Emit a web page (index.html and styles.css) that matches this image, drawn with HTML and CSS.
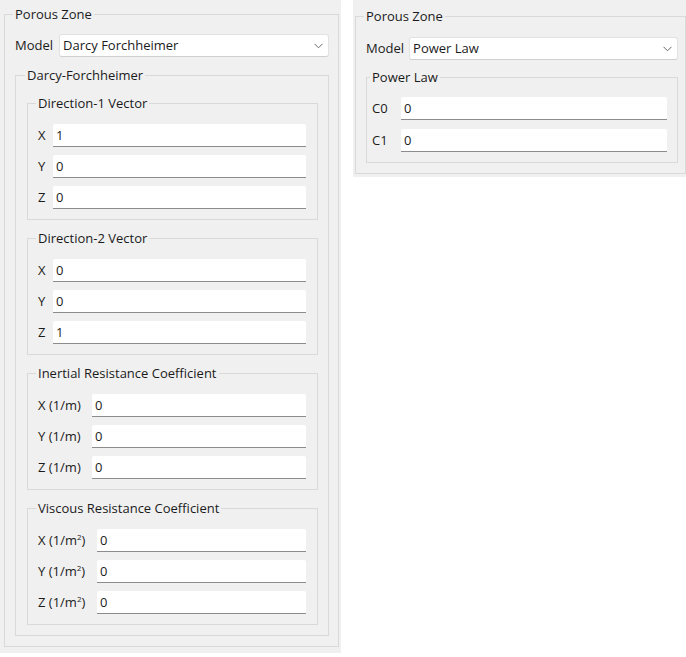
FILE: index.html
```html
<!DOCTYPE html>
<html>
<head>
<meta charset="utf-8">
<link rel="stylesheet" href="styles.css">
</head>
<body>
<div class="page">
  <div class="panel panel-left">
    <fieldset class="group outer outer-left">
      <legend>Porous Zone</legend>
      <div class="model-row">
        <span class="lbl">Model</span>
        <div class="combo"><span>Darcy Forchheimer</span>
          <svg class="chev" width="9" height="6" viewBox="0 0 9 6"><path d="M0.5 0.8 L4.5 4.8 L8.5 0.8" fill="none" stroke="#6a6a6a" stroke-width="1"/></svg>
        </div>
      </div>
      <fieldset class="group darcy">
        <legend>Darcy-Forchheimer</legend>
        <fieldset class="group sub">
          <legend>Direction-1 Vector</legend>
          <div class="rows cols-vec">
            <label>X</label><input class="field" value="1">
            <label>Y</label><input class="field" value="0">
            <label>Z</label><input class="field" value="0">
          </div>
        </fieldset>
        <fieldset class="group sub">
          <legend>Direction-2 Vector</legend>
          <div class="rows cols-vec">
            <label>X</label><input class="field" value="0">
            <label>Y</label><input class="field" value="0">
            <label>Z</label><input class="field" value="1">
          </div>
        </fieldset>
        <fieldset class="group sub">
          <legend>Inertial Resistance Coefficient</legend>
          <div class="rows cols-inertial">
            <label>X (1/m)</label><input class="field" value="0">
            <label>Y (1/m)</label><input class="field" value="0">
            <label>Z (1/m)</label><input class="field" value="0">
          </div>
        </fieldset>
        <fieldset class="group sub">
          <legend>Viscous Resistance Coefficient</legend>
          <div class="rows cols-viscous">
            <label>X (1/m<sup>2</sup>)</label><input class="field" value="0">
            <label>Y (1/m<sup>2</sup>)</label><input class="field" value="0">
            <label>Z (1/m<sup>2</sup>)</label><input class="field" value="0">
          </div>
        </fieldset>
      </fieldset>
    </fieldset>
  </div>
  <div class="panel panel-right">
    <fieldset class="group outer outer-right">
      <legend>Porous Zone</legend>
      <div class="model-row">
        <span class="lbl">Model</span>
        <div class="combo combo-right"><span>Power Law</span>
          <svg class="chev" width="9" height="6" viewBox="0 0 9 6"><path d="M0.5 0.8 L4.5 4.8 L8.5 0.8" fill="none" stroke="#6a6a6a" stroke-width="1"/></svg>
        </div>
      </div>
      <fieldset class="group power">
        <legend>Power Law</legend>
        <div class="rows cols-power">
          <label>C0</label><input class="field" value="0">
          <label>C1</label><input class="field" value="0">
        </div>
      </fieldset>
    </fieldset>
  </div>
</div>
</body>
</html>
```

FILE: styles.css
```css
html, body {
  margin: 0;
  padding: 0;
  background: #ffffff;
}
body {
  font-family: "Open Sans", "Noto Sans", "Liberation Sans", sans-serif;
  font-size: 13px;
  color: #1b1b1b;
}
.page {
  display: flex;
  align-items: flex-start;
  gap: 12px;
}
.panel {
  background: #f0f0f0;
  box-sizing: border-box;
}
.panel-left {
  width: 341px;
  height: 653px;
  padding: 6px 2px 0 4px;
}
.panel-right {
  width: 333px;
  padding: 8px 0 3px 2px;
}
.group {
  margin: 0;
  border: 1px solid #d9d9d9;
  min-width: 0;
  box-sizing: border-box;
}
.group > legend {
  padding: 0 2px;
  margin-left: -2px;
  line-height: 17px;
  height: 17px;
}
.outer-left {
  width: 335px;
  padding: 11px 9px 10px 10px;
}
.outer-right {
  width: 331px;
  padding: 12px 7px 10px 10px;
}
.model-row {
  display: flex;
  align-items: center;
  gap: 6px;
}
.lbl {
  line-height: 23px;
}
.combo {
  flex: 1;
  height: 23px;
  box-sizing: border-box;
  background: #ffffff;
  border: 1px solid #e2e2e2;
  border-bottom-color: #cfcfcf;
  border-radius: 3px;
  display: flex;
  align-items: center;
  justify-content: space-between;
  padding: 0 5px 0 3px;
  line-height: 21px;
}
.combo-right {
  margin-left: -1px;
}
.chev {
  display: block;
}
.darcy {
  margin-top: 10px;
  padding: 11px 10px 10px 11px;
}
.sub {
  padding: 12px 11px 10px 10px;
}
.sub + .sub {
  margin-top: 10px;
}
.power {
  margin-top: 9px;
  padding: 11px 10px 10px 5px;
}
.rows {
  display: grid;
  row-gap: 8px;
  align-items: center;
}
.cols-vec { grid-template-columns: 15px 1fr; }
.cols-inertial { grid-template-columns: 54px 1fr; }
.cols-viscous { grid-template-columns: 59px 1fr; }
.cols-power { grid-template-columns: 29px 1fr; row-gap: 9px; }
.rows label {
  white-space: nowrap;
  line-height: 23px;
}
.rows label sup {
  font-size: 8px;
  line-height: 0;
  vertical-align: 5px;
}
.field {
  display: block;
  width: 100%;
  height: 23px;
  box-sizing: border-box;
  margin: 0;
  border: none;
  border-bottom: 1px solid #8c8c8c;
  border-radius: 2px 2px 0 0;
  background: #ffffff;
  padding: 0 3px;
  font: inherit;
  color: #1b1b1b;
  outline: none;
}
```
